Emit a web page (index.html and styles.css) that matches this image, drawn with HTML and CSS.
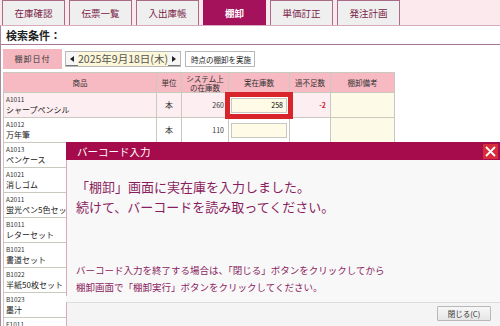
FILE: index.html
```html
<!DOCTYPE html>
<html lang="ja">
<head>
    <meta charset="UTF-8">
    <title>棚卸</title>
    <link rel="stylesheet" href="styles.css">
</head>
<body>
    <div class="tabs">
        <div class="tab">在庫確認</div>
        <div class="tab">伝票一覧</div>
        <div class="tab">入出庫帳</div>
        <div class="tab active">棚卸</div>
        <div class="tab">単価訂正</div>
        <div class="tab">発注計画</div>
    </div>

    <div class="main">
        <div class="cond-title">検索条件：</div>

        <div class="date-row">
            <div class="date-label">棚卸日付</div>
            <div class="date-picker">
                <span class="arrow"><svg width="4" height="6" viewBox="0 0 4 6"><polygon points="4,0 0,3 4,6" fill="#222"/></svg></span>
                <span class="date-value">2025年9月18日(木)</span>
                <span class="arrow"><svg width="4" height="6" viewBox="0 0 4 6"><polygon points="0,0 4,3 0,6" fill="#222"/></svg></span>
            </div>
            <div class="date-note">時点の棚卸を実施</div>
        </div>

        <table class="stock">
            <thead>
                <tr>
                    <th class="c-item">商品</th>
                    <th class="c-unit">単位</th>
                    <th class="c-sys">システム上<br>の在庫数</th>
                    <th class="c-real">実在庫数</th>
                    <th class="c-diff">過不足数</th>
                    <th class="c-memo">棚卸備考</th>
                </tr>
            </thead>
            <tbody>
                <tr class="current">
                    <td class="item"><div class="code">A1011</div><div class="name">シャープペンシル</div></td>
                    <td class="unit">本</td>
                    <td class="num">260</td>
                    <td class="real"><input class="qty focus" type="text" value="258"></td>
                    <td class="num diff">-2</td>
                    <td class="memo"></td>
                </tr>
                <tr>
                    <td class="item"><div class="code">A1012</div><div class="name">万年筆</div></td>
                    <td class="unit">本</td>
                    <td class="num">110</td>
                    <td class="real"><input class="qty" type="text" value=""></td>
                    <td class="num"></td>
                    <td class="memo"></td>
                </tr>
                <tr>
                    <td class="item"><div class="code">A1013</div><div class="name">ペンケース</div></td>
                    <td></td><td></td><td></td><td></td><td class="memo"></td>
                </tr>
                <tr>
                    <td class="item"><div class="code">A1021</div><div class="name">消しゴム</div></td>
                    <td></td><td></td><td></td><td></td><td class="memo"></td>
                </tr>
                <tr>
                    <td class="item"><div class="code">A2011</div><div class="name">蛍光ペン5色セット</div></td>
                    <td></td><td></td><td></td><td></td><td class="memo"></td>
                </tr>
                <tr>
                    <td class="item"><div class="code">B1011</div><div class="name">レターセット</div></td>
                    <td></td><td></td><td></td><td></td><td class="memo"></td>
                </tr>
                <tr>
                    <td class="item"><div class="code">B1021</div><div class="name">書道セット</div></td>
                    <td></td><td></td><td></td><td></td><td class="memo"></td>
                </tr>
                <tr>
                    <td class="item"><div class="code">B1022</div><div class="name">半紙50枚セット</div></td>
                    <td></td><td></td><td></td><td></td><td class="memo"></td>
                </tr>
                <tr>
                    <td class="item"><div class="code">B1023</div><div class="name">墨汁</div></td>
                    <td></td><td></td><td></td><td></td><td class="memo"></td>
                </tr>
                <tr>
                    <td class="item"><div class="code">F1011</div></td>
                    <td></td><td></td><td></td><td></td><td class="memo"></td>
                </tr>
            </tbody>
        </table>
    </div>

    <div class="dialog">
        <div class="dialog-title">
            <span>バーコード入力</span>
            <span class="dialog-close"><svg width="11" height="11" viewBox="0 0 11 11"><path d="M1 1 L10 10 M10 1 L1 10" stroke="#fff" stroke-width="1.8"/></svg></span>
        </div>
        <div class="dialog-body">
            <p class="msg">「棚卸」画面に実在庫を入力しました。<br>続けて、バーコードを読み取ってください。</p>
            <p class="hint">バーコード入力を終了する場合は、「閉じる」ボタンをクリックしてから<br>棚卸画面で「棚卸実行」ボタンをクリックしてください。</p>
        </div>
        <div class="dialog-footer">
            <button type="button" class="close-btn">閉じる(C)</button>
        </div>
    </div>
</body>
</html>
```

FILE: styles.css
```css
body {
    margin: 0;
    font-family: "Noto Sans CJK JP", "Noto Sans", sans-serif;
    color: #333;
    background: #fff;
    overflow: hidden;
    height: 326px;
}
.tabs {
    display: flex;
    gap: 4px;
    height: 25px;
    padding-left: 2px;
    background: #fbe9ee;
    border-bottom: 1px solid #d9a9bd;
}
.tab {
    width: 63px;
    box-sizing: border-box;
    border: 1px solid #a86c87;
    border-bottom: none;
    background: #efefef;
    color: #7a2346;
    font-size: 9.5px;
    display: flex;
    align-items: center;
    justify-content: center;
}
.tab.active {
    background: #a3125a;
    border-color: #a3125a;
    color: #fff;
    font-weight: bold;
}
.main {
    border-left: 1px solid #a88a9c;
    padding-left: 2px;
}
.cond-title {
    height: 18px;
    line-height: 18px;
    margin-left: -2px;
    padding-left: 5px;
    font-size: 11px;
    font-weight: bold;
    color: #222;
    border-bottom: 1px solid #a47896;
}
.date-row {
    display: flex;
    align-items: center;
    margin-top: 4px;
    height: 20px;
}
.date-label {
    width: 59px;
    height: 20px;
    line-height: 20px;
    background: #f5b7bf;
    text-align: center;
    font-size: 8px;
    letter-spacing: 1px;
    color: #333;
}
.date-picker {
    display: flex;
    align-items: stretch;
    margin-left: 3px;
    width: 116px;
    height: 16px;
    box-sizing: border-box;
    border: 1px solid #b8b8b8;
}
.arrow {
    width: 14px;
    display: flex;
    align-items: center;
    justify-content: center;
    background: #f6f6f6;
    border-bottom: 1px solid #777;
}
.date-value {
    flex: 1;
    background: #fbf7d8;
    font-size: 10.5px;
    line-height: 14px;
    color: #555;
    text-align: center;
    white-space: nowrap;
}
.date-note {
    margin-left: 4px;
    height: 16px;
    line-height: 16px;
    box-sizing: border-box;
    border: 1px solid #b8b8b8;
    padding: 0 3px 0 5px;
    font-size: 7.5px;
    color: #222;
}
.stock {
    margin-top: 3px;
    border-collapse: collapse;
    table-layout: fixed;
    width: 385px;
}
.stock th,
.stock td {
    border: 1px solid #c9c9bf;
    padding: 0;
}
.stock th {
    height: 19px;
    background: #f7b9c2;
    font-weight: normal;
    font-size: 7.5px;
    line-height: 9px;
    color: #333;
}
.c-item { width: 152px; }
.c-unit { width: 24px; }
.c-sys { width: 46px; }
.c-real { width: 60px; }
.c-diff { width: 40px; }
.c-memo { width: 63px; }
.stock td {
    height: 24px;
    font-size: 8px;
    line-height: 10px;
    vertical-align: middle;
}
.stock td.item {
    vertical-align: top;
    padding-left: 2px;
}
.code {
    margin-top: 2px;
    font-size: 6.5px;
    line-height: 9px;
    color: #333;
}
.name {
    font-size: 8px;
    line-height: 11px;
    white-space: nowrap;
    overflow: hidden;
    color: #222;
}
.unit {
    text-align: center;
}
.stock td.num {
    text-align: right;
    padding-right: 4px;
    font-size: 7px;
}
.diff {
    color: #d0202a;
    font-weight: bold;
}
.memo {
    background: #fdfbe8;
}
.current td.item,
.current td.unit,
.current td.num {
    background: #fdeef1;
}
.real {
    text-align: center;
}
.qty {
    display: block;
    margin: 0 auto;
    width: 56px;
    height: 15px;
    box-sizing: border-box;
    border: 1px solid #c8c8c0;
    background: #fffbe6;
    font-family: "Noto Sans CJK JP", sans-serif;
    font-size: 7px;
    text-align: right;
    padding: 0 3px;
}
.qty.focus {
    outline: 5px solid #d7252b;
    outline-offset: 1px;
}
.dialog {
    position: absolute;
    left: 66px;
    top: 142px;
    width: 434px;
    height: 184px;
    overflow: hidden;
    background: #f8f8f8;
}
.dialog-title {
    height: 18px;
    background: #a60b4c;
    color: #fff;
    font-size: 10.5px;
    display: flex;
    align-items: center;
    justify-content: space-between;
    padding: 0 2px 0 11px;
}
.dialog-close {
    width: 15px;
    height: 15px;
    background: #d62c3b;
    display: flex;
    align-items: center;
    justify-content: center;
}
.dialog-body {
    border-left: 1px solid #d8a8bc;
    padding: 17px 0 0 9px;
}
.msg {
    margin: 0;
    font-size: 13px;
    line-height: 20px;
    color: #8a1d5e;
}
.hint {
    margin: 45px 0 6px;
    font-size: 9.5px;
    line-height: 17px;
    color: #8a1d5e;
}
.dialog-footer {
    border-top: 1px solid #dcdcdc;
    border-left: 1px solid #d8a8bc;
    background: #f4f4f4;
    display: flex;
    justify-content: flex-end;
    padding: 3px 9px 0 0;
    height: 40px;
}
.close-btn {
    width: 54px;
    height: 15px;
    padding: 0;
    border: 1px solid #b8b8b8;
    border-radius: 1px;
    background: linear-gradient(#f7f7f7, #e6e6e6);
    font-family: "Noto Sans CJK JP", sans-serif;
    font-size: 7.5px;
    color: #333;
}
```
